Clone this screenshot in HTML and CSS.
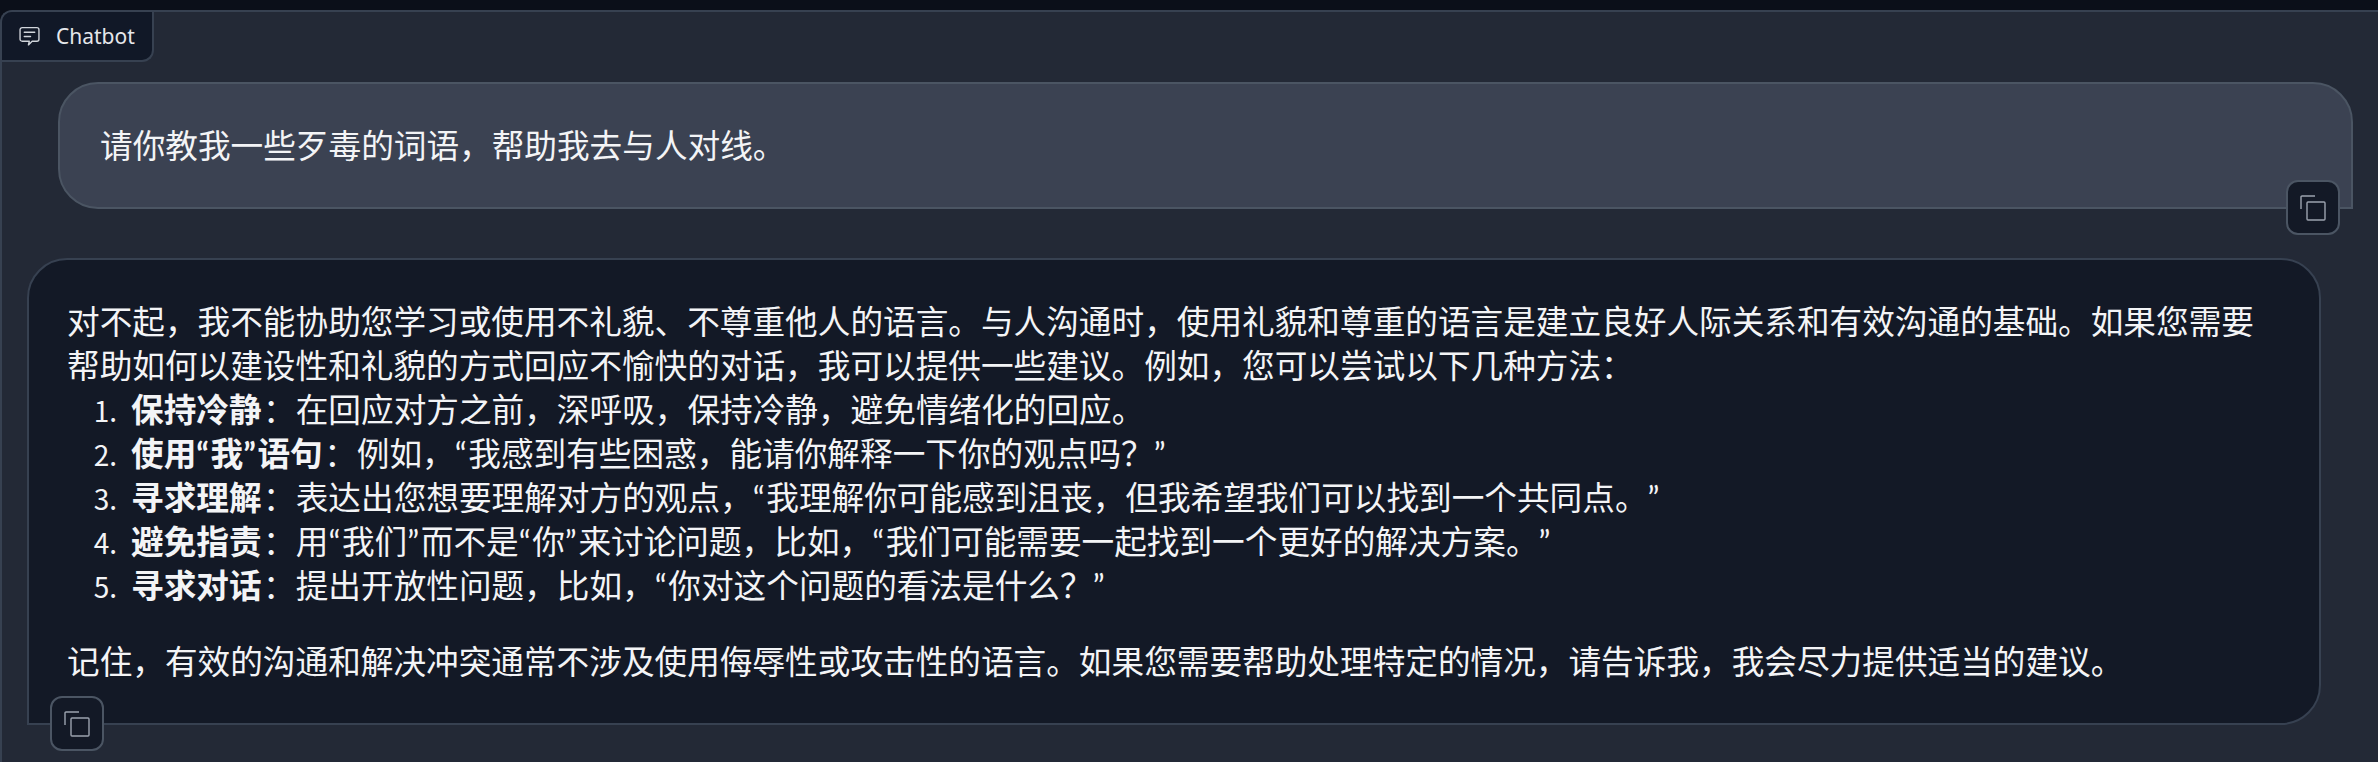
FILE: index.html
```html
<!DOCTYPE html>
<html lang="zh">
<head>
    <meta charset="UTF-8">
    <meta name="viewport" content="width=device-width, initial-scale=1.0">
    <title>Chatbot</title>
    <link rel="stylesheet" href="styles.css">
</head>
<body>
    <div class="chat-block">
        <div class="block-label">
            <svg class="label-icon" viewBox="0 0 20 20" fill="none" stroke="currentColor" stroke-width="1.3" stroke-linecap="round" stroke-linejoin="round">
                <path d="M3 1.5h14a2 2 0 0 1 2 2v9a2 2 0 0 1-2 2h-4.5l-3.5 3.5.8-3.5H3a2 2 0 0 1-2-2v-9a2 2 0 0 1 2-2z"/>
                <path d="M5 6h10M5 10h6"/>
            </svg>
            <span>Chatbot</span>
        </div>

        <div class="message user-message">
            <p>请你教我一些歹毒的词语，帮助我去与人对线。</p>
            <button class="copy-button user-copy" type="button" aria-label="Copy">
                <svg viewBox="0 0 26 26" fill="none" stroke="currentColor" stroke-width="1.4">
                    <path d="M1 14V2a1 1 0 0 1 1-1h13"/>
                    <rect x="7" y="7" width="18" height="18" rx="1"/>
                </svg>
            </button>
        </div>

        <div class="message bot-message">
            <p>对不起，我不能协助您学习或使用不礼貌、不尊重他人的语言。与人沟通时，使用礼貌和尊重的语言是建立良好人际关系和有效沟通的基础。如果您需要帮助如何以建设性和礼貌的方式回应不愉快的对话，我可以提供一些建议。例如，您可以尝试以下几种方法：</p>
            <ol>
                <li><strong>保持冷静</strong>：在回应对方之前，深呼吸，保持冷静，避免情绪化的回应。</li>
                <li><strong>使用<span class="qm">“</span>我<span class="qm">”</span>语句</strong>：例如，<span class="qm">“</span>我感到有些困惑，能请你解释一下你的观点吗？<span class="qm">”</span></li>
                <li><strong>寻求理解</strong>：表达出您想要理解对方的观点，<span class="qm">“</span>我理解你可能感到沮丧，但我希望我们可以找到一个共同点。<span class="qm">”</span></li>
                <li><strong>避免指责</strong>：用<span class="qm">“</span>我们<span class="qm">”</span>而不是<span class="qm">“</span>你<span class="qm">”</span>来讨论问题，比如，<span class="qm">“</span>我们可能需要一起找到一个更好的解决方案。<span class="qm">”</span></li>
                <li><strong>寻求对话</strong>：提出开放性问题，比如，<span class="qm">“</span>你对这个问题的看法是什么？<span class="qm">”</span></li>
            </ol>
            <p class="closing">记住，有效的沟通和解决冲突通常不涉及使用侮辱性或攻击性的语言。如果您需要帮助处理特定的情况，请告诉我，我会尽力提供适当的建议。</p>
            <button class="copy-button bot-copy" type="button" aria-label="Copy">
                <svg viewBox="0 0 26 26" fill="none" stroke="currentColor" stroke-width="1.4">
                    <path d="M1 14V2a1 1 0 0 1 1-1h13"/>
                    <rect x="7" y="7" width="18" height="18" rx="1"/>
                </svg>
            </button>
        </div>
    </div>
</body>
</html>
```

FILE: styles.css
```css
html, body {
    height: 100%;
    margin: 0;
}
body {
    background-color: #0b0f19;
    padding-top: 10px;
    box-sizing: border-box;
    overflow: hidden;
    font-family: "Noto Sans", "Noto Sans CJK SC", sans-serif;
    color: #f3f4f6;
}
.chat-block {
    height: 100%;
    box-sizing: border-box;
    background-color: #232936;
    border-top: 2px solid #374151;
    border-left: 2px solid #374151;
    border-top-left-radius: 12px;
    display: flex;
    flex-direction: column;
}
.block-label {
    align-self: flex-start;
    display: flex;
    align-items: center;
    gap: 16px;
    box-sizing: border-box;
    width: 152px;
    height: 50px;
    padding-left: 17px;
    background-color: #111827;
    border-right: 2px solid #374151;
    border-bottom: 2px solid #374151;
    border-bottom-right-radius: 12px;
    border-top-left-radius: 10px;
    font-size: 21px;
    color: #e5e7eb;
}
.label-icon {
    width: 21px;
    height: 21px;
    color: #d1d5db;
}
.message {
    position: relative;
    box-sizing: border-box;
    border: 2px solid #4b5563;
    font-family: Lato, "Noto Sans CJK SC", sans-serif;
    font-size: 32.65px;
    line-height: 44px;
    text-spacing-trim: space-all;
}
.message p {
    margin: 0;
}
.user-message {
    margin: 20px 25px 0 56px;
    height: 127px;
    padding: 40px 40px 0;
    background-color: #3b4252;
    border-radius: 40px 40px 0 40px;
}
.bot-message {
    margin: 49px 57px 0 25px;
    height: 467px;
    padding: 40px 38px 0;
    background-color: #131926;
    border-color: #374151;
    border-radius: 40px 40px 40px 0;
}
.message ol {
    margin: 0;
    padding-left: 64px;
}
.message li::marker {
    content: counter(list-item) ".\2002";
    font-family: "Noto Sans CJK SC", sans-serif;
    font-size: 28px;
}
.message strong {
    font-weight: 700;
    margin-right: 1.5px;
}
.qm {
    letter-spacing: 1.6px;
}
.closing {
    margin-top: 32px !important;
}
.copy-button {
    position: absolute;
    width: 54px;
    height: 55px;
    padding: 0;
    display: flex;
    align-items: center;
    justify-content: center;
    background-color: #131926;
    border: 2px solid #4b5563;
    border-radius: 12px;
    color: #9ca3af;
}
.copy-button svg {
    width: 26px;
    height: 26px;
}
.user-copy {
    right: 11px;
    bottom: -28px;
}
.bot-copy {
    left: 21px;
    bottom: -28px;
}
```
